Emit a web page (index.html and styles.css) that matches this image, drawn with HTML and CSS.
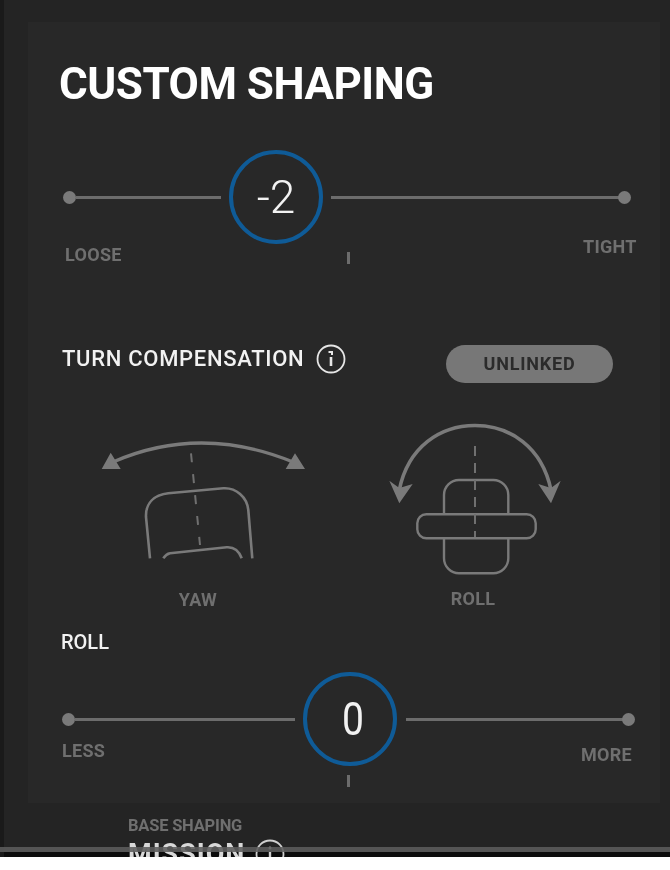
FILE: index.html
```html
<!DOCTYPE html>
<html lang="en">
<head>
<meta charset="utf-8">
<title>Custom Shaping</title>
<link rel="stylesheet" href="styles.css">
</head>
<body>
<div class="screen">
  <div class="strip"></div>
  <div class="main">
    <section class="panel">
      <h1 class="title">CUSTOM SHAPING</h1>

      <div class="slider slider-top">
        <span class="dot"></span><span class="seg seg-a"></span>
        <div class="knob">-2</div>
        <span class="seg seg-b"></span><span class="dot dot-end"></span>
      </div>
      <div class="ends ends-top">
        <span class="label loose">LOOSE</span>
        <span class="tick tick-top"></span>
        <span class="label tight">TIGHT</span>
      </div>

      <div class="comp">
        <div class="comp-title">
          <span class="comp-text">TURN COMPENSATION</span>
          <svg class="info" viewBox="0 0 30 30" width="30" height="30" aria-hidden="true">
            <circle cx="15" cy="15" r="13.5" fill="none" stroke="#e6e6e6" stroke-width="1.8"/>
            <path d="M15 13v9" stroke="#e6e6e6" stroke-width="2.6" fill="none"/>
            <path d="M12.500 8h3.500v3" stroke="#e6e6e6" stroke-width="2" fill="none"/>
          </svg>
        </div>
        <div class="pill">UNLINKED</div>
      </div>

      <div class="axes">
        <div class="axis axis-yaw">
          <svg viewBox="90 440 216 125" width="216" height="125" aria-hidden="true">
            <path d="M113 462Q200 424 293 462" fill="none" stroke="#7a7a7a" stroke-width="3.4"/>
            <path d="M101.700 469L110.700 452.700 120.700 469Z M305 469L295 453.300 285.700 469Z" fill="#7a7a7a"/>
            <path d="M150 558.300L146 517C145.500 503 154 495 168.300 493.300L223.300 488.300C236 487.500 247 497 248.300 510L252.300 558.300" fill="none" stroke="#7a7a7a" stroke-width="2.600"/>
            <path d="M163.300 558.300C165.500 555 167 553.800 170 553.300L226.700 547.300C234 546.800 239 551 241.700 558.300" fill="none" stroke="#7a7a7a" stroke-width="2.600"/>
            <path d="M191 453.300L200 545" fill="none" stroke="#707070" stroke-width="2" stroke-dasharray="9 12"/>
          </svg>
          <span class="label">YAW</span>
        </div>
        <div class="axis axis-roll">
          <svg viewBox="383 422 180 155" width="180" height="155" aria-hidden="true">
            <path d="M399.300 490C408 447 440 425.500 475 425.500S542 447 551 490" fill="none" stroke="#7a7a7a" stroke-width="3.600"/>
            <path d="M399.300 503.300L389.300 480.700 399.300 488 412.700 484Z M551 503.300L538.300 484 551 488 560.700 480.700Z" fill="#7a7a7a"/>
            <rect x="444" y="480" width="64.300" height="93.300" rx="15" fill="none" stroke="#7a7a7a" stroke-width="2.400"/>
            <rect x="417.300" y="514.300" width="118.400" height="24" rx="9" fill="#282828" stroke="#7a7a7a" stroke-width="2.400"/>
            <path d="M475 446V537" fill="none" stroke="#707070" stroke-width="2" stroke-dasharray="10 7"/>
          </svg>
          <span class="label">ROLL</span>
        </div>
      </div>

      <h2 class="roll-title">ROLL</h2>

      <div class="slider slider-bottom">
        <span class="dot"></span><span class="seg seg-c"></span>
        <div class="knob knob-zero"><span class="zero">0</span></div>
        <span class="seg seg-d"></span><span class="dot dot-end"></span>
      </div>
      <div class="ends ends-bottom">
        <span class="label less">LESS</span>
        <span class="tick tick-bottom"></span>
        <span class="label more">MORE</span>
      </div>
    </section>

    <footer class="base">
      <div class="base-label">BASE SHAPING</div>
      <div class="base-value">
        <span>MISSION</span>
        <svg viewBox="0 0 30 30" width="30" height="30" aria-hidden="true">
          <circle cx="15" cy="15" r="13.500" fill="none" stroke="#cfcfcf" stroke-width="1.800"/>
          <path d="M15 13v9" stroke="#cfcfcf" stroke-width="2.400" fill="none"/>
          <circle cx="15" cy="9" r="1.500" fill="#cfcfcf"/>
        </svg>
      </div>
    </footer>
  </div>
  <div class="bar"></div>
</div>
</body>
</html>
```
FILE: styles.css
```css
* { box-sizing: border-box; }
html, body { margin: 0; padding: 0; background: #fff; }
body { width: 670px; height: 870px; overflow: hidden; font-family: Roboto, "Liberation Sans", sans-serif; }

.screen {
  position: relative;
  display: flex;
  width: 670px;
  height: 857px;
  overflow: hidden;
  background: linear-gradient(#242424 0, #242424 852px, #0c0c0c 852px);
  filter: blur(0.5px);
}
.strip { width: 4px; background: #1a1a1a; flex: none; }
.main { flex: 1; padding: 22px 10px 0 24px; }

.panel {
  height: 781px;
  padding: 40px 0 0 33px;
  background: #282828;
}

.title {
  margin: 0 0 0 -2px;
  height: 44px;
  font-size: 44px;
  line-height: 44px;
  font-weight: 700;
  letter-spacing: -0.5px;
  color: #fff;
  white-space: nowrap;
}

.slider { display: flex; align-items: center; height: 94px; }
.slider-top { margin-top: 44px; margin-left: 2px; }
.slider-bottom { margin-top: 20px; margin-left: 1px; }
.dot { flex: none; width: 13px; height: 13px; border-radius: 50%; background: #7a7a7a; }
.dot-end { margin-left: -1px; }
.seg { flex: none; height: 3px; background: #6c6c6c; }
.seg-a { width: 145px; margin-right: 8px; }
.seg-b { width: 288px; margin-left: 8px; }
.seg-c { width: 220px; margin-right: 8px; }
.seg-d { width: 217px; margin-left: 9px; }

.knob {
  flex: none;
  width: 94px;
  height: 94px;
  border: 4px solid #0f5b97;
  border-radius: 50%;
  display: flex;
  align-items: center;
  justify-content: center;
  font-size: 46px;
  font-weight: 300;
  color: #f2f2f2;
}
.zero { display: block; margin-left: 5px; transform: scaleX(0.85); font-weight: 400; }

.label {
  font-size: 18px;
  line-height: 16px;
  font-weight: 700;
  letter-spacing: 0.3px;
  color: #6f6f6f;
  white-space: nowrap;
}

.ends { display: flex; align-items: flex-start; height: 22px; }
.tick { flex: none; width: 3px; height: 12px; background: #6c6c6c; }
.loose { margin: 3px 0 0 4px; width: 282px; flex: none; }
.tick-top { margin-top: 8px; }
.tight { margin: -5px 0 0 233px; }
.less { margin: -23px 0 0 1px; width: 225px; flex: none; }
.tick-bottom { margin-top: 9px; margin-left: 60px; }
.more { margin: -19px 0 0 231px; }

.comp { display: flex; align-items: center; margin-top: 79px; height: 38px; }
.comp-title { display: flex; align-items: center; gap: 12px; margin: -11px 0 0 1px; width: 384px; }
.comp-text { font-size: 22px; line-height: 26px; font-weight: 500; letter-spacing: 0.7px; color: #f2f2f2; white-space: nowrap; }
.info { flex: none; }
.pill {
  width: 167px;
  height: 38px;
  border-radius: 19px;
  background: #777;
  color: #2b2b2b;
  font-size: 18px;
  line-height: 38px;
  font-weight: 700;
  letter-spacing: 0.8px;
  text-align: center;
}

.axes { display: flex; align-items: flex-start; margin-top: 39px; }
.axis { display: flex; flex-direction: column; align-items: center; flex: none; }
.axis-yaw { margin: 18px 0 0 29px; }
.axis-yaw .label { margin-top: 27px; }
.axis-roll { margin-left: 77px; }
.axis-roll .label { margin-top: 14px; }

.roll-title {
  margin: 24px 0 0;
  font-size: 20px;
  line-height: 20px;
  font-weight: 500;
  color: #f2f2f2;
}

.base { padding: 15px 0 0 100px; }
.base-label { font-size: 16.5px; line-height: 16px; font-weight: 700; letter-spacing: -0.2px; color: #6f6f6f; white-space: nowrap; }
.base-value { display: flex; align-items: center; gap: 10px; margin-top: 5px; font-size: 27px; line-height: 30px; font-weight: 700; letter-spacing: 1px; color: #d8d8d8; white-space: nowrap; }

.bar {
  position: absolute;
  left: 0;
  right: 0;
  top: 847px;
  height: 5px;
  background: rgba(92, 92, 92, 0.88);
}
```
